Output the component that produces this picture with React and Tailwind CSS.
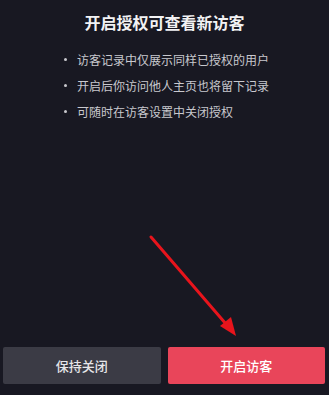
import React from 'react';

const tips = [
  '访客记录中仅展示同样已授权的用户',
  '开启后你访问他人主页也将留下记录',
  '可随时在访客设置中关闭授权',
];

export default function App() {
  return (
    <div
      className="relative flex h-[395px] w-[329px] flex-col bg-[#181822] text-white"
      style={{ fontFamily: '"Noto Sans CJK SC", "Noto Sans", sans-serif' }}
    >
      {/* Title */}
      <h1 className="pt-[11px] text-center text-[16px] font-bold leading-[22px] text-[#f2f2f4]">
        开启授权可查看新访客
      </h1>

      {/* Tips */}
      <div className="mt-[18px] flex justify-center">
        <ul className="flex flex-col gap-[9px] pl-[4px]">
          {tips.map((t) => (
            <li key={t} className="flex items-center text-[12px] leading-[17px] text-[#c8c8ce]">
              <span className="mr-[10px] h-[3px] w-[3px] rounded-full bg-[#c8c8ce]" />
              {t}
            </li>
          ))}
        </ul>
      </div>

      <div className="flex-1" />

      {/* Buttons */}
      <div className="flex gap-[7px] pb-[11px] pl-[3px] pr-[4px]">
        <button className="h-[37px] flex-1 rounded-[2px] bg-[#3b3b45] text-[13px] font-medium text-[#e6e6ea]">
          保持关闭
        </button>
        <button className="h-[37px] flex-1 rounded-[2px] bg-[#e9455a] text-[13px] font-medium text-white">
          开启访客
        </button>
      </div>

      {/* Annotation arrow */}
      <svg
        className="pointer-events-none absolute left-0 top-0"
        width="329"
        height="395"
        viewBox="0 0 329 395"
      >
        <line x1="151" y1="237" x2="226" y2="324" stroke="#e8141c" strokeWidth="3" strokeLinecap="round" />
        <polygon points="236,336 220,326 231,317" fill="#e8141c" />
      </svg>
    </div>
  );
}
